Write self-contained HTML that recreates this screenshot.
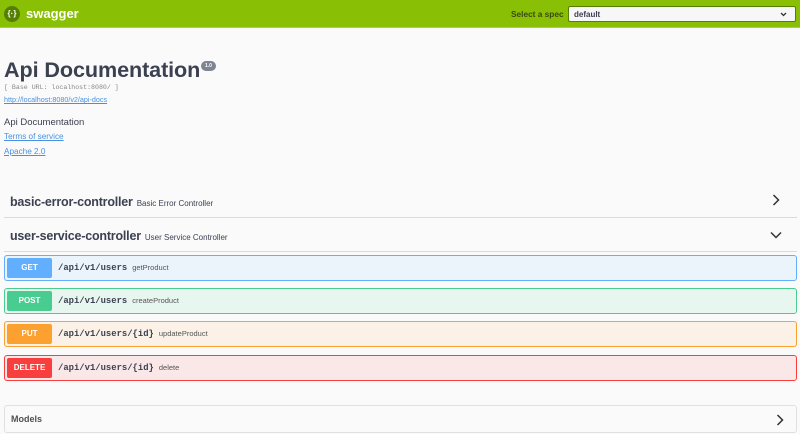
<!DOCTYPE html>
<html><head><style>
*{margin:0;padding:0;box-sizing:border-box}
body{width:800px;height:434px;overflow:hidden;background:#fafafa;font-family:"Liberation Sans",sans-serif;color:#3b4151;position:relative}
.top{position:absolute;left:0;top:0;width:800px;height:28px;background:#89bf04;border-bottom:1px solid #a6d23d}
.logo{position:absolute;left:4px;top:6px;width:16px;height:16px;border-radius:50%;background:#547f00;color:#fff;font-size:8px;font-weight:bold;text-align:center;line-height:16px}
.brand{position:absolute;left:26px;top:6px;color:#fff;font-weight:bold;font-size:13px}
.sel-l{position:absolute;left:511px;top:9px;font-size:8.3px;font-weight:bold;color:#3a4a10}
.sel{position:absolute;left:568px;top:6px;width:228px;height:16px;background:#f7f7f7;border:1px solid #547f00;border-radius:2px;font-size:8px;font-weight:bold;padding:3px 5px;color:#3b4151}
.sel svg{position:absolute;right:8px;top:5px}
.abs{position:absolute}
h1{position:absolute;left:4px;top:57px;font-size:21.6px;font-weight:bold;color:#3b4151;letter-spacing:-0.1px}
.badge{position:absolute;left:201px;top:61px;width:15px;height:10px;border-radius:5px;background:#7d8492;color:#fff;font-size:5px;font-weight:bold;text-align:center;line-height:10px}
a{color:#4990e2;text-decoration:underline}
.tag{position:absolute;left:4px;width:793px;height:35px;border-bottom:1px solid #d8dbe0}
.tag .t{position:absolute;left:6px;top:10px;white-space:nowrap}
.tag b{font-size:12.5px;letter-spacing:-0.2px}
.tag span{font-size:8px;margin-left:4px}
.op{position:absolute;left:4px;width:793px;height:26px;border:1px solid;border-radius:3px}
.op .m{position:absolute;left:2px;top:2px;width:45px;height:20px;border-radius:2px;color:#fff;font-size:8px;font-weight:bold;text-align:center;line-height:20px}
.op .p{position:absolute;left:53px;top:7px;font-family:"Liberation Mono",monospace;font-weight:bold;font-size:8.9px;color:#3b4151;white-space:nowrap}
.op .d{font-family:"Liberation Sans",sans-serif;font-weight:normal;font-size:7.5px;margin-left:5px;color:#555}
</style></head><body>
<div class="top"><div class="logo">{·}</div><div class="brand">swagger</div>
<div class="sel-l">Select a spec</div>
<div class="sel">default<svg width="7" height="5" viewBox="0 0 7 5"><path d="M1 1l2.5 2.5L6 1" stroke="#333" stroke-width="1.3" fill="none"/></svg></div></div>
<h1>Api Documentation</h1><div class="badge">1.0</div>
<div class="abs" style="left:4px;top:84px;font-family:'Liberation Mono',monospace;font-size:6.6px;color:#888">[ Base URL: localhost:8080/ ]</div>
<a class="abs" style="left:4px;top:95px;font-size:7.2px">http://localhost:8080/v2/api-docs</a>
<div class="abs" style="left:4px;top:117px;font-size:9.5px">Api Documentation</div>
<a class="abs" style="left:4px;top:132px;font-size:8.2px">Terms of service</a>
<a class="abs" style="left:4px;top:147px;font-size:8.2px">Apache 2.0</a>
<div class="tag" style="top:183px"><div class="t"><b>basic-error-controller</b><span>Basic Error Controller</span></div>
<svg class="abs" style="left:768px;top:11px" width="8" height="12" viewBox="0 0 8 12"><path d="M1.5 1l5 5-5 5" stroke="#333" stroke-width="1.5" fill="none"/></svg></div>
<div class="tag" style="top:217px"><div class="t"><b>user-service-controller</b><span>User Service Controller</span></div>
<svg class="abs" style="left:766px;top:14px" width="12" height="8" viewBox="0 0 12 8"><path d="M1 1.5l5 5 5-5" stroke="#333" stroke-width="1.5" fill="none"/></svg></div>
<div class="op" style="top:255px;background:#ebf3fb;border-color:#61affe"><div class="m" style="background:#61affe">GET</div><div class="p">/api/v1/users<span class="d">getProduct</span></div></div>
<div class="op" style="top:288px;background:#e8f6f0;border-color:#49cc90"><div class="m" style="background:#49cc90">POST</div><div class="p">/api/v1/users<span class="d">createProduct</span></div></div>
<div class="op" style="top:321px;background:#fbf1e6;border-color:#fca130"><div class="m" style="background:#fca130">PUT</div><div class="p">/api/v1/users/{id}<span class="d">updateProduct</span></div></div>
<div class="op" style="top:355px;background:#fae7e7;border-color:#f93e3e"><div class="m" style="background:#f93e3e">DELETE</div><div class="p">/api/v1/users/{id}<span class="d">delete</span></div></div>
<div class="abs" style="left:4px;top:405px;width:793px;height:28px;border:1px solid #e0e0e0;border-radius:3px;background:#fafafa">
<b class="abs" style="left:6px;top:8px;font-size:9px;color:#505050">Models</b>
<svg class="abs" style="left:771px;top:8px" width="8" height="12" viewBox="0 0 8 12"><path d="M1.5 1l5 5-5 5" stroke="#333" stroke-width="1.5" fill="none"/></svg></div>
</body></html>
